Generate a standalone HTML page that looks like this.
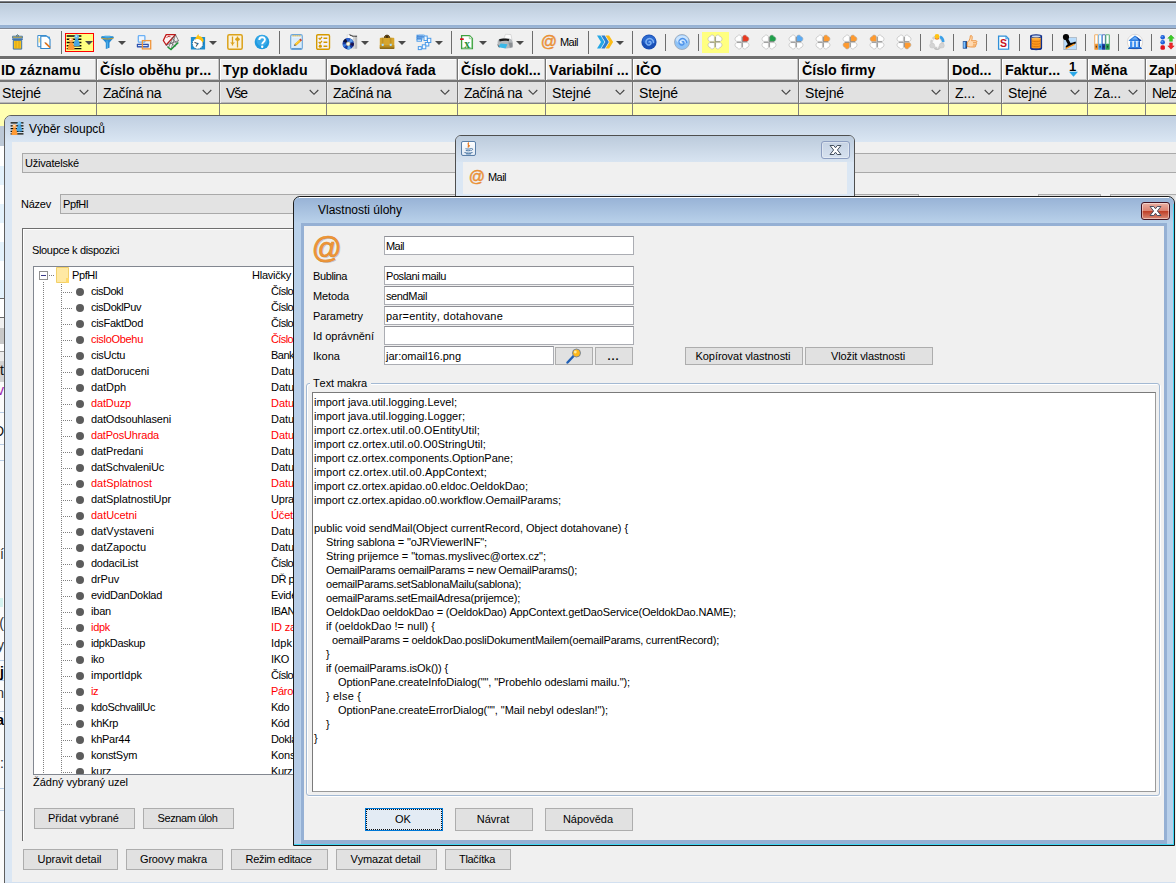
<!DOCTYPE html><html lang="cs"><head><meta charset="utf-8"><title>Vlastnosti úlohy</title><style>
html,body{margin:0;padding:0}
body{width:1176px;height:883px;overflow:hidden;position:relative;background:#f0f0f0;font-family:"Liberation Sans",sans-serif;font-size:11px;color:#000;font-kerning:none}
div,span{position:absolute;box-sizing:border-box;white-space:pre}
.t{line-height:14px;height:14px}
.hd{font-weight:bold;font-size:14.2px;line-height:18px;top:61px;height:18px}
.fl{font-size:14px;line-height:16px;top:85px;height:16px}
.btn{background:#e1e1e1;border:1px solid #adadad;text-align:center;line-height:18px;padding-right:2px}
.fld{background:#fff;border:1px solid #abadb3;border-top-color:#8e8f95;line-height:19px;padding-left:1px}
.sep{width:1px;background:#6d6d6d}
.red{color:#f00}
.tr{left:0;height:16px;line-height:16px;width:260px}
.code{left:2px;line-height:14px;height:14px}
</style></head><body>
<div style="left:0px;top:0px;width:1176px;height:1px;background:#fafafa"></div>
<div style="left:0px;top:1px;width:1176px;height:1px;background:#7a7e86"></div>
<div style="left:0px;top:2px;width:1176px;height:1px;background:#4b4b4b"></div>
<div style="left:0px;top:3px;width:1176px;height:1px;background:#c5d5e6"></div>
<div style="left:0px;top:4px;width:1176px;height:21px;background:linear-gradient(#bdccdc,#d6e3f2)"></div>
<div style="left:0px;top:25px;width:1176px;height:3px;background:linear-gradient(#95b0d2,#9cb8d9)"></div>
<div style="left:0px;top:28px;width:1176px;height:1px;background:#818997"></div>
<div style="left:0px;top:29px;width:1176px;height:27px;background:#f0f0f0;border-top:1px solid #f8f8f8"></div>
<div style="left:0px;top:56px;width:1176px;height:3px;background:#6f6f6f"></div>
<div style="left:0px;top:59px;width:1176px;height:21px;background:#f0f0f0;border-top:1px solid #fff;border-bottom:1px solid #c4c4c4"></div>
<div style="left:0px;top:80px;width:1176px;height:2px;background:#767676"></div>
<div style="left:0px;top:82px;width:1176px;height:21px;background:#e1e1e1;border-bottom:1px solid #b8b8b8"></div>
<div style="left:0px;top:103px;width:1176px;height:1px;background:#808080"></div>
<div style="left:0px;top:104px;width:1176px;height:23px;background:#ffffb2"></div>
<div style="left:95px;top:59px;width:1px;height:21px;background:#c6c6c6"></div>
<div style="left:96px;top:59px;width:1px;height:45px;background:#747474"></div>
<div style="left:97px;top:59px;width:1px;height:21px;background:#fff"></div>
<div style="left:97px;top:82px;width:1px;height:21px;background:#ececec"></div>
<div style="left:96px;top:104px;width:1px;height:12px;background:#808080"></div>
<div style="left:218px;top:59px;width:1px;height:21px;background:#c6c6c6"></div>
<div style="left:219px;top:59px;width:1px;height:45px;background:#747474"></div>
<div style="left:220px;top:59px;width:1px;height:21px;background:#fff"></div>
<div style="left:220px;top:82px;width:1px;height:21px;background:#ececec"></div>
<div style="left:219px;top:104px;width:1px;height:12px;background:#808080"></div>
<div style="left:325px;top:59px;width:1px;height:21px;background:#c6c6c6"></div>
<div style="left:326px;top:59px;width:1px;height:45px;background:#747474"></div>
<div style="left:327px;top:59px;width:1px;height:21px;background:#fff"></div>
<div style="left:327px;top:82px;width:1px;height:21px;background:#ececec"></div>
<div style="left:326px;top:104px;width:1px;height:12px;background:#808080"></div>
<div style="left:456px;top:59px;width:1px;height:21px;background:#c6c6c6"></div>
<div style="left:457px;top:59px;width:1px;height:45px;background:#747474"></div>
<div style="left:458px;top:59px;width:1px;height:21px;background:#fff"></div>
<div style="left:458px;top:82px;width:1px;height:21px;background:#ececec"></div>
<div style="left:457px;top:104px;width:1px;height:12px;background:#808080"></div>
<div style="left:544px;top:59px;width:1px;height:21px;background:#c6c6c6"></div>
<div style="left:545px;top:59px;width:1px;height:45px;background:#747474"></div>
<div style="left:546px;top:59px;width:1px;height:21px;background:#fff"></div>
<div style="left:546px;top:82px;width:1px;height:21px;background:#ececec"></div>
<div style="left:545px;top:104px;width:1px;height:12px;background:#808080"></div>
<div style="left:631px;top:59px;width:1px;height:21px;background:#c6c6c6"></div>
<div style="left:632px;top:59px;width:1px;height:45px;background:#747474"></div>
<div style="left:633px;top:59px;width:1px;height:21px;background:#fff"></div>
<div style="left:633px;top:82px;width:1px;height:21px;background:#ececec"></div>
<div style="left:632px;top:104px;width:1px;height:12px;background:#808080"></div>
<div style="left:797px;top:59px;width:1px;height:21px;background:#c6c6c6"></div>
<div style="left:798px;top:59px;width:1px;height:45px;background:#747474"></div>
<div style="left:799px;top:59px;width:1px;height:21px;background:#fff"></div>
<div style="left:799px;top:82px;width:1px;height:21px;background:#ececec"></div>
<div style="left:798px;top:104px;width:1px;height:12px;background:#808080"></div>
<div style="left:947px;top:59px;width:1px;height:21px;background:#c6c6c6"></div>
<div style="left:948px;top:59px;width:1px;height:45px;background:#747474"></div>
<div style="left:949px;top:59px;width:1px;height:21px;background:#fff"></div>
<div style="left:949px;top:82px;width:1px;height:21px;background:#ececec"></div>
<div style="left:948px;top:104px;width:1px;height:12px;background:#808080"></div>
<div style="left:1000px;top:59px;width:1px;height:21px;background:#c6c6c6"></div>
<div style="left:1001px;top:59px;width:1px;height:45px;background:#747474"></div>
<div style="left:1002px;top:59px;width:1px;height:21px;background:#fff"></div>
<div style="left:1002px;top:82px;width:1px;height:21px;background:#ececec"></div>
<div style="left:1001px;top:104px;width:1px;height:12px;background:#808080"></div>
<div style="left:1086px;top:59px;width:1px;height:21px;background:#c6c6c6"></div>
<div style="left:1087px;top:59px;width:1px;height:45px;background:#747474"></div>
<div style="left:1088px;top:59px;width:1px;height:21px;background:#fff"></div>
<div style="left:1088px;top:82px;width:1px;height:21px;background:#ececec"></div>
<div style="left:1087px;top:104px;width:1px;height:12px;background:#808080"></div>
<div style="left:1144px;top:59px;width:1px;height:21px;background:#c6c6c6"></div>
<div style="left:1145px;top:59px;width:1px;height:45px;background:#747474"></div>
<div style="left:1146px;top:59px;width:1px;height:21px;background:#fff"></div>
<div style="left:1146px;top:82px;width:1px;height:21px;background:#ececec"></div>
<div style="left:1145px;top:104px;width:1px;height:12px;background:#808080"></div>
<span class="hd" style="left:1px;letter-spacing:0.17px">ID záznamu</span>
<span class="hd" style="left:100px;letter-spacing:0px">Číslo oběhu pr...</span>
<span class="hd" style="left:223px;letter-spacing:0.1px">Typ dokladu</span>
<span class="hd" style="left:330px;letter-spacing:0px">Dokladová řada</span>
<span class="hd" style="left:461px;letter-spacing:0px">Číslo dokl...</span>
<span class="hd" style="left:549px;letter-spacing:0px">Variabilní ...</span>
<span class="hd" style="left:636px;letter-spacing:0px">IČO</span>
<span class="hd" style="left:802px;letter-spacing:0px">Číslo firmy</span>
<span class="hd" style="left:952px;letter-spacing:0px">Dod...</span>
<span class="hd" style="left:1005px;letter-spacing:0px">Faktur...</span>
<span class="hd" style="left:1091px;letter-spacing:0px">Měna</span>
<span class="hd" style="left:1149px;letter-spacing:0px">Zapl</span>
<span class="fl" style="left:2px;letter-spacing:-0.116px">Stejné</span>
<svg style="position:absolute;left:79px;top:89px" width="10" height="7" viewBox="0 0 10 7"><path d="M.7 1l4.300 4.300L9.300 1" fill="none" stroke="#444" stroke-width="1.150"/></svg>
<span class="fl" style="left:103px;letter-spacing:-0.474px">Začíná na</span>
<svg style="position:absolute;left:202px;top:89px" width="10" height="7" viewBox="0 0 10 7"><path d="M.7 1l4.300 4.300L9.300 1" fill="none" stroke="#444" stroke-width="1.150"/></svg>
<span class="fl" style="left:226px;letter-spacing:-1.041px">Vše</span>
<svg style="position:absolute;left:309px;top:89px" width="10" height="7" viewBox="0 0 10 7"><path d="M.7 1l4.300 4.300L9.300 1" fill="none" stroke="#444" stroke-width="1.150"/></svg>
<span class="fl" style="left:333px;letter-spacing:-0.474px">Začíná na</span>
<svg style="position:absolute;left:440px;top:89px" width="10" height="7" viewBox="0 0 10 7"><path d="M.7 1l4.300 4.300L9.300 1" fill="none" stroke="#444" stroke-width="1.150"/></svg>
<span class="fl" style="left:464px;letter-spacing:-0.474px">Začíná na</span>
<svg style="position:absolute;left:528px;top:89px" width="10" height="7" viewBox="0 0 10 7"><path d="M.7 1l4.300 4.300L9.300 1" fill="none" stroke="#444" stroke-width="1.150"/></svg>
<span class="fl" style="left:552px;letter-spacing:-0.116px">Stejné</span>
<svg style="position:absolute;left:615px;top:89px" width="10" height="7" viewBox="0 0 10 7"><path d="M.7 1l4.300 4.300L9.300 1" fill="none" stroke="#444" stroke-width="1.150"/></svg>
<span class="fl" style="left:639px;letter-spacing:-0.116px">Stejné</span>
<svg style="position:absolute;left:781px;top:89px" width="10" height="7" viewBox="0 0 10 7"><path d="M.7 1l4.300 4.300L9.300 1" fill="none" stroke="#444" stroke-width="1.150"/></svg>
<span class="fl" style="left:805px;letter-spacing:-0.116px">Stejné</span>
<svg style="position:absolute;left:931px;top:89px" width="10" height="7" viewBox="0 0 10 7"><path d="M.7 1l4.300 4.300L9.300 1" fill="none" stroke="#444" stroke-width="1.150"/></svg>
<span class="fl" style="left:955px;letter-spacing:-0.055px">Z...</span>
<svg style="position:absolute;left:984px;top:89px" width="10" height="7" viewBox="0 0 10 7"><path d="M.7 1l4.300 4.300L9.300 1" fill="none" stroke="#444" stroke-width="1.150"/></svg>
<span class="fl" style="left:1008px;letter-spacing:-0.116px">Stejné</span>
<svg style="position:absolute;left:1070px;top:89px" width="10" height="7" viewBox="0 0 10 7"><path d="M.7 1l4.300 4.300L9.300 1" fill="none" stroke="#444" stroke-width="1.150"/></svg>
<span class="fl" style="left:1094px;letter-spacing:-0.201px">Za...</span>
<svg style="position:absolute;left:1128px;top:89px" width="10" height="7" viewBox="0 0 10 7"><path d="M.7 1l4.300 4.300L9.300 1" fill="none" stroke="#444" stroke-width="1.150"/></svg>
<span class="fl" style="left:1152px;letter-spacing:-0.752px">Nelz</span>
<span style="left:1069px;top:60px;font-weight:bold;font-size:13px;line-height:13px">1</span>
<svg style="position:absolute;left:1069px;top:71px" width="9" height="6" viewBox="0 0 9 6"><path d="M0 .8h9L4.500 5.800z" fill="#2aa8e8"/></svg>
<svg style="position:absolute;left:9px;top:34px;overflow:visible" width="16" height="16" viewBox="0 0 16 16"><path d="M3.600 2.200h9.800v1.800h-9.800z" fill="#f6c21d" stroke="#3f74ad" stroke-width=".9"/><path d="M7 2l1.500-1.500L10 2z" fill="#f6c21d" stroke="#3f74ad" stroke-width=".8"/>
<path d="M3.200 5.200h10.600" stroke="#3f74ad" stroke-width="1.600"/>
<path d="M4.300 6.300h8.400v8.800h-8.400z" fill="#f6c21d" stroke="#3f74ad" stroke-width="1"/>
<path d="M7 7v7.500M10 7v7.500" stroke="#d8a01a" stroke-width=".9"/></svg>
<svg style="position:absolute;left:36px;top:34px;overflow:visible" width="16" height="16" viewBox="0 0 16 16"><path d="M1.800 1.500h8.500v11.200h-8.500z" fill="#fff" stroke="#3f8fcf" stroke-width="1"/><path d="M3.200 4v4.500" stroke="#f6d46a" stroke-width="1.200"/>
<path d="M4.800 2.200h6.200l3 3v9.300h-9.200z" fill="#fff" stroke="#2f86cc" stroke-width="1.100"/><path d="M10.500 2.200l3.500 3.500v-3z" fill="#3f97dc"/>
<path d="M9.300 8.800l4.800 4.700" stroke="#e0741c" stroke-width="1.700"/><path d="M8.400 7.900l1.400.5-.8.900z" fill="#666"/></svg>
<div class="sep" style="left:61px;top:31px;width:1px;height:23px;"></div>
<div style="left:65px;top:33px;width:29px;height:19px;background:#ffff80;border:1px solid #f00"></div>
<svg style="position:absolute;left:66px;top:35px;overflow:visible" width="16" height="16" viewBox="0 0 16 16"><path d="M.7 1h14.700M.7 4.300h14.700M.7 7.500h14.700M.7 10.700h14.700M.7 13.600h14.700" stroke="#0a0a00" stroke-width="1.400"/>
<path d="M7.500 10.400C7.500 7 9 5.600 9.400 3.500h2.600c.4 2.100 1.900 3.500 1.900 6.900 0 1-6.400 1-6.400 0z" fill="#4aa6e0"/><circle cx="10.700" cy="1.700" r="2.400" fill="#62b6ea"/><circle cx="10.200" cy="1.100" r=".9" fill="#c5e6fb"/>
<path d="M1.600 14.200c0-3.400 1.700-4.900 2.100-7h2.800c.4 2.100 2.100 3.600 2.100 7 0 .9-7 .9-7 0z" fill="#ff9a35"/><circle cx="5.100" cy="5" r="2.300" fill="#ffab55"/><circle cx="4.700" cy="4.300" r=".9" fill="#fff0dc"/></svg>
<svg style="position:absolute;left:85px;top:41px" width="8" height="4" viewBox="0 0 8 4"><path d="M0 0h8L4 4z" fill="#4a4a4a"/></svg>
<svg style="position:absolute;left:100px;top:35px;overflow:visible" width="16" height="16" viewBox="0 0 16 16"><path d="M.9 2.300C.9 .300 13.900 .300 13.900 2.300c0 1-4.400 4.700-4.400 5.700v4.800L5.800 14.100V8C5.800 7 .9 3.300 .9 2.300z" fill="#2489d4"/>
<path d="M2.500 1.700c2-1 7.800-1 9.800 0-2 1-7.800 1-9.800 0z" fill="#52b4ea"/>
<path d="M1.300 3.100c2.500 1.200 9.700 1.200 12.200 0" stroke="#d9a425" stroke-width="1" fill="none"/>
<path d="M6.800 5.500c.6 1 .6 2 .6 7.500" stroke="#5fc0f0" stroke-width="1.100" fill="none" opacity=".8"/></svg>
<svg style="position:absolute;left:118px;top:41px" width="8" height="4" viewBox="0 0 8 4"><path d="M0 0h8L4 4z" fill="#4a4a4a"/></svg>
<svg style="position:absolute;left:136px;top:34px;overflow:visible" width="16" height="16" viewBox="0 0 16 16"><rect x="2.300" y="1.600" width="6.600" height="6.600" rx=".8" fill="#eef5fd" stroke="#6ab0f5" stroke-width="1.300"/>
<rect x=".8" y="9.800" width="12" height="3.600" rx=".6" fill="#2a4faf"/><rect x="2" y="11" width="9.600" height="1.100" fill="#dfe8f7"/>
<rect x="6.400" y="6.600" width="8.300" height="8.300" fill="none" stroke="#f0963c" stroke-width="1.300"/></svg>
<svg style="position:absolute;left:162px;top:34px;overflow:visible" width="16" height="16" viewBox="0 0 16 16"><path d="M4.200 .6h9.300L4.200 11 1.300 6.500z" fill="#fdf3f3" stroke="#c01818" stroke-width="1.300" stroke-linejoin="round"/>
<path d="M6 2.500l2.500.2M4.500 4l2.500-2.500" stroke="#c01818" stroke-width=".8"/>
<path d="M13.500 .6l3 6-7.500 9-4.800-4.600M13.500.6L9 15.500M4.200 11l12.300-4.400M7 7.500l6.500 5M10 3.500l5 6.500M11.500 2.500l-5 11" fill="none" stroke="#5a5a5a" stroke-width=".7"/>
<path d="M5.600 13l3.400 2.600 7.300-7" fill="none" stroke="#1f9a3a" stroke-width="1.400"/></svg>
<svg style="position:absolute;left:190px;top:34px;overflow:visible" width="16" height="16" viewBox="0 0 16 16"><rect x=".9" y="2.900" width="14.200" height="12.600" rx=".6" fill="#1e8ed0"/>
<circle cx="7.700" cy="9.600" r="5.300" fill="#fff" stroke="#1a3c5a" stroke-width=".7" stroke-dasharray="1 1.400"/>
<path d="M7.700 9.600L4.500 8.400M7.700 9.600l-1.500 3" stroke="#2a2a2a" stroke-width=".9"/><circle cx="7.700" cy="9.600" r=".9" fill="#1e6ea8"/>
<path d="M8.300 0l-3.500 5.300 2.600-.3c2.200.2 4 1.300 5.200 3.500l1-1.500c-.1-2.600-1.700-4.400-4.600-4.900z" fill="#ffc20e"/></svg>
<svg style="position:absolute;left:209px;top:41px" width="8" height="4" viewBox="0 0 8 4"><path d="M0 0h8L4 4z" fill="#4a4a4a"/></svg>
<svg style="position:absolute;left:227px;top:34px;overflow:visible" width="16" height="16" viewBox="0 0 16 16"><rect x=".8" y=".8" width="14.400" height="14.400" rx="1.500" fill="#faf2dd" stroke="#dba21b" stroke-width="1.500"/>
<path d="M5.500 2.500v9M10.500 2.500v11" stroke="#dba21b" stroke-width="1.300"/><path d="M3 8.500h5l-2.500 2z" fill="#dba21b"/><ellipse cx="10.500" cy="5.200" rx="2.300" ry="1.700" fill="#dba21b"/></svg>
<svg style="position:absolute;left:254px;top:34px;overflow:visible" width="16" height="16" viewBox="0 0 16 16"><circle cx="8" cy="8" r="7.300" fill="#1f9be0"/><circle cx="8" cy="6.500" r="5.500" fill="#4cb4ee" opacity=".6"/>
<path d="M5.300 6c0-3.600 5.600-3.600 5.600-.3 0 2.200-2.700 2.300-2.700 4.600" fill="none" stroke="#fff" stroke-width="1.900"/><circle cx="8.200" cy="12.700" r="1.200" fill="#fff"/></svg>
<div class="sep" style="left:279px;top:31px;width:1px;height:23px;"></div>
<svg style="position:absolute;left:289px;top:34px;overflow:visible" width="16" height="16" viewBox="0 0 16 16"><rect x="1.700" y=".6" width="11.600" height="14.800" rx="1.600" fill="#e6f3fd" stroke="#6fa8da" stroke-width="1.200"/>
<path d="M2.500 14.600h10" stroke="#5f9ad0" stroke-width="1.300"/>
<path d="M3.500 1.800h8.500" stroke="#d6b24a" stroke-width="1.500" stroke-dasharray="1.200 .8"/>
<path d="M3.500 5h8.500M3.500 7h8.500M3.500 9h8.500M3.500 11h8.500M3.500 13h8.500" stroke="#c4e0f6" stroke-width=".7"/>
<path d="M6.300 10.800l5-4.500" stroke="#f5b21a" stroke-width="2.300"/><path d="M6.600 10.300l4.700-4.200" stroke="#ffe04a" stroke-width=".8"/>
<path d="M11 6.500l1.300-1.200" stroke="#c8402a" stroke-width="2.300"/><path d="M4.900 12l.8-1.900 1.400 1.300z" fill="#555"/></svg>
<svg style="position:absolute;left:316px;top:34px;overflow:visible" width="16" height="16" viewBox="0 0 16 16"><rect x=".7" y=".7" width="12.800" height="14.600" rx="1.200" fill="#f4f3fb" stroke="#d59a00" stroke-width="1.400"/>
<path d="M7.500 4.200h3.800M7.500 8.200h3.800M7.500 12.200h3.800" stroke="#d59a00" stroke-width="1.500"/>
<path d="M2.700 4l1.300 1.300 2-2.500M2.700 8l1.300 1.300 2-2.500" fill="none" stroke="#d59a00" stroke-width="1.300"/><circle cx="4.300" cy="12.200" r="1.600" fill="#d59a00"/></svg>
<svg style="position:absolute;left:342px;top:34px;overflow:visible" width="16" height="16" viewBox="0 0 16 16"><path d="M5.200 .8c2-.6 3.500-.5 5 .5l4.800.2v13l-5 .2-4.800-1z" fill="#fbfbfb" stroke="#cfcfcf" stroke-width=".6"/>
<path d="M7.500 .8c1.500.2 2.200 1.400 3.500 1.500h4" fill="none" stroke="#1a1a1a" stroke-width="1"/>
<path d="M12 2.500v12" stroke="#c4c4c4" stroke-width="1.500"/><path d="M14 2.500v12" stroke="#9a9a9a" stroke-width="1.200"/>
<circle cx="6.200" cy="9.800" r="5.700" fill="#173a9e"/>
<path d="M6.200 9.800L1 7.500A5.700 5.700 0 0 1 4 4.500z" fill="#0b1238"/><path d="M6.200 9.800L4 4.500a5.700 5.700 0 0 1 3.500-.2z" fill="#2a5fd0"/>
<path d="M6.200 9.800l2-5.300a5.700 5.700 0 0 1 3 2.800z" fill="#5a9ae8"/><path d="M6.200 9.800l5.600-.8a5.700 5.700 0 0 1-.5 3.300z" fill="#1a0f4a"/>
<path d="M6.200 9.800l3 4.800a5.700 5.700 0 0 1-4 .8z" fill="#5aa8f0"/><path d="M6.200 9.800L2 13.600a5.700 5.700 0 0 1-1.400-3z" fill="#3a7ae0"/>
<circle cx="6.200" cy="9.800" r="1.900" fill="#fff6d8" stroke="#d8c890" stroke-width=".5"/><circle cx="6.200" cy="9.800" r=".7" fill="#fff"/></svg>
<svg style="position:absolute;left:361px;top:41px" width="8" height="4" viewBox="0 0 8 4"><path d="M0 0h8L4 4z" fill="#4a4a4a"/></svg>
<svg style="position:absolute;left:379px;top:34px;overflow:visible" width="16" height="16" viewBox="0 0 16 16"><path d="M5.300 4.200c.2-2.200 1-3 2.700-3s2.500.8 2.700 3" fill="#a87414" stroke="#3a2808" stroke-width="1"/><path d="M6.300 3.900c.2-1.200.7-1.600 1.700-1.600s1.500.4 1.700 1.600z" fill="#1a1208"/>
<rect x=".8" y="3.800" width="14.500" height="10.900" rx="1" fill="#d6a52e"/><path d="M.8 11.200h14.500v2.500c0 .6-.4 1-1 1H1.800c-.6 0-1-.4-1-1z" fill="#b98c20"/>
<path d="M.8 14.200h14.500" stroke="#6a4e10" stroke-width=".9"/>
<path d="M3.600 3.800v7.500M11.600 3.800v7.500" stroke="#bf9226" stroke-width="1.600"/>
<path d="M2.500 9.800h2.400l-.3 2.200h-1.800zM10.500 9.800h2.400l-.3 2.200h-1.800z" fill="#a8dcfa"/></svg>
<svg style="position:absolute;left:398px;top:41px" width="8" height="4" viewBox="0 0 8 4"><path d="M0 0h8L4 4z" fill="#4a4a4a"/></svg>
<svg style="position:absolute;left:416px;top:34px;overflow:visible" width="16" height="16" viewBox="0 0 16 16"><g fill="#f4f9ff" stroke="#4a9ae8" stroke-width="1"><rect x="1" y="1.200" width="7" height="2"/><rect x="1" y="3.200" width="5" height="2"/><rect x="1" y="5.200" width="4.500" height="2"/>
<rect x="8" y="2" width="3.200" height="4.500"/><rect x="11.500" y="4.300" width="3.300" height="4.200"/><rect x="9.300" y="8.500" width="3.500" height="3.500"/><rect x="6.300" y="10.800" width="3.500" height="4"/><rect x="2.300" y="12.600" width="3" height="3"/></g>
<path d="M1 2.200h6.500M1 4.200h4.500" stroke="#2a6ec8" stroke-width=".9"/><path d="M3 .8h4.500v1" fill="none" stroke="#9cc8f5" stroke-width=".9"/></svg>
<svg style="position:absolute;left:435px;top:41px" width="8" height="4" viewBox="0 0 8 4"><path d="M0 0h8L4 4z" fill="#4a4a4a"/></svg>
<div class="sep" style="left:451px;top:31px;width:1px;height:23px;"></div>
<svg style="position:absolute;left:459px;top:34px;overflow:visible" width="16" height="16" viewBox="0 0 16 16"><path d="M2.600 1.700h8l2.800 2.800v10h-10.800z" fill="#fff" stroke="#3fa040" stroke-width="1.300"/><path d="M10.300 1.700v3h3" fill="#eaf5ea" stroke="#7cc47c" stroke-width=".7"/>
<path d="M3.300 14.300h9.500M12.700 5v9" stroke="#8fce8f" stroke-width=".8"/>
<rect x="1" y="4.300" width="3.800" height="1.800" rx=".5" fill="#d8101c"/>
<text x="8.100" y="14" text-anchor="middle" font-family="Liberation Serif, serif" font-weight="bold" font-size="11.500" fill="#2a9238">x</text></svg>
<svg style="position:absolute;left:479px;top:41px" width="8" height="4" viewBox="0 0 8 4"><path d="M0 0h8L4 4z" fill="#4a4a4a"/></svg>
<svg style="position:absolute;left:496px;top:33px;overflow:visible" width="18" height="16" viewBox="0 0 18 16"><path d="M9.500 1.300l5.500.3 1 5.500-8.500-.5z" fill="#fdfdfd" stroke="#c8c8c8" stroke-width=".6"/>
<path d="M1.600 9c0-1.800 1.400-3 2.400-3.300l9.500-.2c1.600.4 3 1.800 3.200 3.500l.2 4.500c0 .8-.5 1.300-1.200 1.400l-5.200.6-8-1.800c-.6-.2-.9-.6-.9-1.200z" fill="#b4b8bc"/>
<path d="M3 6.500c2.500-1.200 8-1.200 10.200-.3l-.5 2c-2.500-.7-6.500-.6-9 .2z" fill="#1a1a1a"/>
<path d="M12.300 9.500l4 .3.200 3.700-2.500 1.200z" fill="#8a8e92"/>
<path d="M4.700 10.500l6.800.8-2 4.300-7.500-1.500z" fill="#3ab8e8"/><path d="M1.800 11.500l1.500 3" stroke="#5a5e62" stroke-width=".8"/></svg>
<svg style="position:absolute;left:516px;top:41px" width="8" height="4" viewBox="0 0 8 4"><path d="M0 0h8L4 4z" fill="#4a4a4a"/></svg>
<div class="sep" style="left:532px;top:31px;width:1px;height:23px;"></div>
<svg style="position:absolute;left:541px;top:34px;overflow:visible" width="16" height="16" viewBox="0 0 16 16"><text x="8.300" y="13.400" text-anchor="middle" font-family="Liberation Sans, sans-serif" font-size="16" fill="#c8c8c8" opacity=".7">@</text><text x="7.800" y="12.900" text-anchor="middle" font-family="Liberation Sans, sans-serif" font-size="16" fill="#f0963a" stroke="#e8882a" stroke-width=".35">@</text></svg>
<span class="t" style="left:560px;top:35px;letter-spacing:-0.542px;">Mail</span>
<div class="sep" style="left:588px;top:31px;width:1px;height:23px;"></div>
<svg style="position:absolute;left:597px;top:34px;overflow:visible" width="16" height="16" viewBox="0 0 16 16"><path d="M0 1.500h3.500L7.500 8 3.500 14.500H0L4 8z" fill="#25a7e6"/><path d="M4.300 1.500h3.500l4 6.500-4 6.500H4.300l4-6.500z" fill="#2b7fd0"/><path d="M8.600 1.500h3.500l4 6.500-4 6.500H8.600l4-6.500z" fill="#fcbc16"/></svg>
<svg style="position:absolute;left:616px;top:41px" width="8" height="4" viewBox="0 0 8 4"><path d="M0 0h8L4 4z" fill="#4a4a4a"/></svg>
<div class="sep" style="left:632px;top:31px;width:1px;height:23px;"></div>
<svg style="position:absolute;left:641px;top:34px;overflow:visible" width="16" height="16" viewBox="0 0 16 16"><circle cx="8" cy="8" r="7.600" fill="#1a4fb5"/><ellipse cx="8" cy="6" rx="6.300" ry="4.500" fill="#2f6fd6" opacity=".8"/>
<path d="M8 8c.8-.8 2-.2 2 1 0 1.600-2 2.600-3.600 1.600-2-1.200-2-4.200.2-5.500 2.600-1.500 6 .3 6 3.500" fill="none" stroke="#7fb2f5" stroke-width="1.500" stroke-linecap="round"/></svg>
<div class="sep" style="left:665px;top:34px;width:1px;height:17px;"></div>
<svg style="position:absolute;left:674px;top:34px;overflow:visible" width="16" height="16" viewBox="0 0 16 16"><circle cx="8" cy="8" r="7.500" fill="#8fc3f7" stroke="#9aa6b5" stroke-width=".8"/><ellipse cx="8" cy="5.500" rx="6" ry="4" fill="#d8ecff" opacity=".8"/>
<path d="M8 8c.8-.8 2-.2 2 1 0 1.600-2 2.600-3.600 1.600-2-1.200-2-4.200.2-5.500 2.600-1.500 6 .3 6 3.500" fill="none" stroke="#4f93ea" stroke-width="1.400" stroke-linecap="round"/>
<path d="M8 8c-.8.800-2 .2-2-1" fill="none" stroke="#fff" stroke-width="1"/></svg>
<div class="sep" style="left:698px;top:34px;width:1px;height:17px;"></div>
<div style="left:702px;top:32px;width:27px;height:21px;background:#ffff80"></div>
<svg style="position:absolute;left:707px;top:34px;overflow:visible" width="16" height="16" viewBox="0 0 16 16"><path d="M8.600 7.400V3.200c0-2.600 3.700-2.900 4.300-.6 2.500.2 2.900 4.200.2 4.800z" transform="translate(16,0) scale(-1,1)" fill="#ffffff" stroke="#b0b0b0" stroke-width=".6"/><path d="M8.600 7.400V3.200c0-2.600 3.700-2.900 4.300-.6 2.500.2 2.900 4.200.2 4.800z"  fill="#ffffff" stroke="#b0b0b0" stroke-width=".6"/><path d="M8.600 7.400V3.200c0-2.600 3.700-2.900 4.300-.6 2.500.2 2.900 4.200.2 4.800z" transform="translate(16,16) scale(-1,-1)" fill="#ffffff" stroke="#b0b0b0" stroke-width=".6"/><path d="M8.600 7.400V3.200c0-2.600 3.700-2.900 4.300-.6 2.500.2 2.900 4.200.2 4.800z" transform="translate(0,16) scale(1,-1)" fill="#ffffff" stroke="#b0b0b0" stroke-width=".6"/><path d="M8.300 3v4.700h4.700M8.300 13v-4.700M3 8.300h4.700" fill="none" stroke="#222" stroke-width=".6" opacity=".55"/></svg>
<svg style="position:absolute;left:734px;top:34px;overflow:visible" width="16" height="16" viewBox="0 0 16 16"><path d="M8.600 7.400V3.200c0-2.600 3.700-2.900 4.300-.6 2.500.2 2.900 4.200.2 4.800z" transform="translate(16,0) scale(-1,1)" fill="#ffffff" stroke="#b0b0b0" stroke-width=".6"/><path d="M8.600 7.400V3.200c0-2.600 3.700-2.900 4.300-.6 2.500.2 2.900 4.200.2 4.800z"  fill="#e8381f" stroke="#b0b0b0" stroke-width=".6"/><path d="M8.600 7.400V3.200c0-2.600 3.700-2.900 4.300-.6 2.500.2 2.900 4.200.2 4.800z" transform="translate(16,16) scale(-1,-1)" fill="#ffffff" stroke="#b0b0b0" stroke-width=".6"/><path d="M8.600 7.400V3.200c0-2.600 3.700-2.900 4.300-.6 2.500.2 2.900 4.200.2 4.800z" transform="translate(0,16) scale(1,-1)" fill="#ffffff" stroke="#b0b0b0" stroke-width=".6"/><path d="M8.300 3v4.700h4.700M8.300 13v-4.700M3 8.300h4.700" fill="none" stroke="#222" stroke-width=".6" opacity=".55"/></svg>
<svg style="position:absolute;left:761px;top:34px;overflow:visible" width="16" height="16" viewBox="0 0 16 16"><path d="M8.600 7.400V3.200c0-2.600 3.700-2.900 4.300-.6 2.500.2 2.900 4.200.2 4.800z" transform="translate(16,0) scale(-1,1)" fill="#ffffff" stroke="#b0b0b0" stroke-width=".6"/><path d="M8.600 7.400V3.200c0-2.600 3.700-2.900 4.300-.6 2.500.2 2.900 4.200.2 4.800z"  fill="#1f9f4a" stroke="#b0b0b0" stroke-width=".6"/><path d="M8.600 7.400V3.200c0-2.600 3.700-2.900 4.300-.6 2.500.2 2.900 4.200.2 4.800z" transform="translate(16,16) scale(-1,-1)" fill="#ffffff" stroke="#b0b0b0" stroke-width=".6"/><path d="M8.600 7.400V3.200c0-2.600 3.700-2.900 4.300-.6 2.500.2 2.900 4.200.2 4.800z" transform="translate(0,16) scale(1,-1)" fill="#ffffff" stroke="#b0b0b0" stroke-width=".6"/><path d="M8.300 3v4.700h4.700M8.300 13v-4.700M3 8.300h4.700" fill="none" stroke="#222" stroke-width=".6" opacity=".55"/></svg>
<svg style="position:absolute;left:788px;top:34px;overflow:visible" width="16" height="16" viewBox="0 0 16 16"><path d="M8.600 7.400V3.200c0-2.600 3.700-2.900 4.300-.6 2.500.2 2.900 4.200.2 4.800z" transform="translate(16,0) scale(-1,1)" fill="#ffffff" stroke="#b0b0b0" stroke-width=".6"/><path d="M8.600 7.400V3.200c0-2.600 3.700-2.900 4.300-.6 2.500.2 2.900 4.200.2 4.800z"  fill="#5aabf5" stroke="#b0b0b0" stroke-width=".6"/><path d="M8.600 7.400V3.200c0-2.600 3.700-2.900 4.300-.6 2.500.2 2.900 4.200.2 4.800z" transform="translate(16,16) scale(-1,-1)" fill="#ffffff" stroke="#b0b0b0" stroke-width=".6"/><path d="M8.600 7.400V3.200c0-2.600 3.700-2.900 4.300-.6 2.500.2 2.900 4.200.2 4.800z" transform="translate(0,16) scale(1,-1)" fill="#ffffff" stroke="#b0b0b0" stroke-width=".6"/><path d="M8.300 3v4.700h4.700M8.300 13v-4.700M3 8.300h4.700" fill="none" stroke="#222" stroke-width=".6" opacity=".55"/></svg>
<svg style="position:absolute;left:815px;top:34px;overflow:visible" width="16" height="16" viewBox="0 0 16 16"><path d="M8.600 7.400V3.200c0-2.600 3.700-2.900 4.300-.6 2.500.2 2.900 4.200.2 4.800z" transform="translate(16,0) scale(-1,1)" fill="#ffffff" stroke="#b0b0b0" stroke-width=".6"/><path d="M8.600 7.400V3.200c0-2.600 3.700-2.900 4.300-.6 2.500.2 2.900 4.200.2 4.800z"  fill="#ff9a2e" stroke="#b0b0b0" stroke-width=".6"/><path d="M8.600 7.400V3.200c0-2.600 3.700-2.900 4.300-.6 2.500.2 2.900 4.200.2 4.800z" transform="translate(16,16) scale(-1,-1)" fill="#ffffff" stroke="#b0b0b0" stroke-width=".6"/><path d="M8.600 7.400V3.200c0-2.600 3.700-2.900 4.300-.6 2.500.2 2.900 4.200.2 4.800z" transform="translate(0,16) scale(1,-1)" fill="#ffffff" stroke="#b0b0b0" stroke-width=".6"/><path d="M8.300 3v4.700h4.700M8.300 13v-4.700M3 8.300h4.700" fill="none" stroke="#222" stroke-width=".6" opacity=".55"/></svg>
<svg style="position:absolute;left:842px;top:34px;overflow:visible" width="16" height="16" viewBox="0 0 16 16"><path d="M8.600 7.400V3.200c0-2.600 3.700-2.900 4.300-.6 2.500.2 2.900 4.200.2 4.800z" transform="translate(16,0) scale(-1,1)" fill="#ffffff" stroke="#b0b0b0" stroke-width=".6"/><path d="M8.600 7.400V3.200c0-2.600 3.700-2.900 4.300-.6 2.500.2 2.900 4.200.2 4.800z"  fill="#ff9a2e" stroke="#b0b0b0" stroke-width=".6"/><path d="M8.600 7.400V3.200c0-2.600 3.700-2.900 4.300-.6 2.500.2 2.900 4.200.2 4.800z" transform="translate(16,16) scale(-1,-1)" fill="#ff9a2e" stroke="#b0b0b0" stroke-width=".6"/><path d="M8.600 7.400V3.200c0-2.600 3.700-2.900 4.300-.6 2.500.2 2.900 4.200.2 4.800z" transform="translate(0,16) scale(1,-1)" fill="#ffffff" stroke="#b0b0b0" stroke-width=".6"/><path d="M8.300 3v4.700h4.700M8.300 13v-4.700M3 8.300h4.700" fill="none" stroke="#222" stroke-width=".6" opacity=".55"/></svg>
<svg style="position:absolute;left:869px;top:34px;overflow:visible" width="16" height="16" viewBox="0 0 16 16"><path d="M8.600 7.400V3.200c0-2.600 3.700-2.900 4.300-.6 2.500.2 2.900 4.200.2 4.800z" transform="translate(16,0) scale(-1,1)" fill="#ff9a2e" stroke="#b0b0b0" stroke-width=".6"/><path d="M8.600 7.400V3.200c0-2.600 3.700-2.900 4.300-.6 2.500.2 2.900 4.200.2 4.800z"  fill="#ffffff" stroke="#b0b0b0" stroke-width=".6"/><path d="M8.600 7.400V3.200c0-2.600 3.700-2.900 4.300-.6 2.500.2 2.900 4.200.2 4.800z" transform="translate(16,16) scale(-1,-1)" fill="#ffffff" stroke="#b0b0b0" stroke-width=".6"/><path d="M8.600 7.400V3.200c0-2.600 3.700-2.900 4.300-.6 2.500.2 2.900 4.200.2 4.800z" transform="translate(0,16) scale(1,-1)" fill="#ffffff" stroke="#b0b0b0" stroke-width=".6"/><path d="M8.300 3v4.700h4.700M8.300 13v-4.700M3 8.300h4.700" fill="none" stroke="#222" stroke-width=".6" opacity=".55"/></svg>
<svg style="position:absolute;left:896px;top:34px;overflow:visible" width="16" height="16" viewBox="0 0 16 16"><path d="M8.600 7.400V3.200c0-2.600 3.700-2.900 4.300-.6 2.500.2 2.900 4.200.2 4.800z" transform="translate(16,0) scale(-1,1)" fill="#ffffff" stroke="#b0b0b0" stroke-width=".6"/><path d="M8.600 7.400V3.200c0-2.600 3.700-2.900 4.300-.6 2.500.2 2.900 4.200.2 4.800z"  fill="#ffffff" stroke="#b0b0b0" stroke-width=".6"/><path d="M8.600 7.400V3.200c0-2.600 3.700-2.900 4.300-.6 2.500.2 2.900 4.200.2 4.800z" transform="translate(16,16) scale(-1,-1)" fill="#ffffff" stroke="#b0b0b0" stroke-width=".6"/><path d="M8.600 7.400V3.200c0-2.600 3.700-2.900 4.300-.6 2.500.2 2.900 4.200.2 4.800z" transform="translate(0,16) scale(1,-1)" fill="#ff9a2e" stroke="#b0b0b0" stroke-width=".6"/><path d="M8.300 3v4.700h4.700M8.300 13v-4.700M3 8.300h4.700" fill="none" stroke="#222" stroke-width=".6" opacity=".55"/></svg>
<div class="sep" style="left:920px;top:34px;width:1px;height:17px;"></div>
<svg style="position:absolute;left:929px;top:34px;overflow:visible" width="16" height="16" viewBox="0 0 16 16"><circle cx="8" cy="8.500" r="5.600" fill="none" stroke="#cfcfcf" stroke-width="2.400" stroke-dasharray="3 1.200"/>
<path d="M11 2.800c2 .8 3.200 2.800 3.200 5.200" fill="none" stroke="#3aa0e8" stroke-width="2.600"/>
<circle cx="8" cy="8.800" r="3.800" fill="#fafafa"/>
<circle cx="8" cy="2.400" r="2.400" fill="#ffc414"/><path d="M6 4.300c1 .8 3 .8 4 0" stroke="#f08a1a" stroke-width="1.100" fill="none"/>
<circle cx="3.200" cy="11.600" r="2.500" fill="#d4d4d4" stroke="#bdbdbd" stroke-width=".4"/><circle cx="12.800" cy="11.600" r="2.500" fill="#d4d4d4" stroke="#bdbdbd" stroke-width=".4"/>
<path d="M5.500 14.500c1.500 1 3.500 1 5 0" fill="none" stroke="#bdbdbd" stroke-width="1.200"/></svg>
<div class="sep" style="left:953px;top:34px;width:1px;height:17px;"></div>
<svg style="position:absolute;left:962px;top:34px;overflow:visible" width="16" height="16" viewBox="0 0 16 16"><rect x="1.200" y="7.600" width="3.500" height="6.600" fill="#3f8fe6" stroke="#1e4f9a" stroke-width=".8"/><rect x="1.600" y="8" width="1.300" height="5.800" fill="#8ccaff"/><path d="M4.300 7.600v6.600" stroke="#0e1f4a" stroke-width=".8"/>
<path d="M5.200 8.300c1.800-.8 3-3 3.100-6.500.6-.6 1.400-.3 1.700.4.400 1.200.2 2.800-.4 4.500h4.400c1 0 1.200 1.400.3 1.700.7.500.5 1.500-.3 1.700.5.500.3 1.500-.5 1.600.3.700-.1 1.300-.9 1.300H8.500c-1.400 0-2-.4-3.300-.5z" fill="#ffd9b0" stroke="#e8862a" stroke-width=".8"/>
<path d="M11 8.500h3M11 10.200h2.800M10.800 11.800h2.300" stroke="#e8862a" stroke-width=".6"/></svg>
<div class="sep" style="left:986px;top:34px;width:1px;height:17px;"></div>
<svg style="position:absolute;left:995px;top:34px;overflow:visible" width="16" height="16" viewBox="0 0 16 16"><path d="M3.600 2.100h7.400l2.600 2.600v10.500h-10z" fill="#fff" stroke="#2f8fd8" stroke-width="1.300"/><path d="M10.800 2.100v2.800h2.800z" fill="#8cc8f5" stroke="#2f8fd8" stroke-width=".6"/>
<path d="M4.300 14.500h8.700" stroke="#a8d4f5" stroke-width=".9"/>
<text x="8.600" y="12.800" text-anchor="middle" font-family="Liberation Sans, sans-serif" font-size="10.500" font-weight="bold" fill="#c8141e">S</text></svg>
<div class="sep" style="left:1019px;top:34px;width:1px;height:17px;"></div>
<svg style="position:absolute;left:1028px;top:34px;overflow:visible" width="16" height="16" viewBox="0 0 16 16"><path d="M2.800 2.300v11.600c0 2 10.600 2 10.600 0V2.300z" fill="#ff9a1f" stroke="#10308a" stroke-width="1.400"/>
<path d="M3.500 2.500c0-1.500 9.200-1.500 9.200 0v1.300c-2 1-7.200 1-9.200 0z" fill="#c8d8f0"/><ellipse cx="8.100" cy="2.200" rx="5.300" ry="1.500" fill="none" stroke="#10308a" stroke-width="1.100"/>
<ellipse cx="8.100" cy="4.600" rx="4.500" ry="1.200" fill="#ffb84a"/>
<path d="M3.600 6.800c2 1.200 7 1.200 9 0M3.600 9.300c2 1.200 7 1.200 9 0M3.600 11.800c2 1.200 7 1.200 9 0" fill="none" stroke="#d8780e" stroke-width=".9"/>
<path d="M2.800 14.200c1.500 1.600 9.100 1.600 10.600 0" fill="none" stroke="#10308a" stroke-width="1.600"/></svg>
<div class="sep" style="left:1052px;top:34px;width:1px;height:17px;"></div>
<svg style="position:absolute;left:1062px;top:34px;overflow:visible" width="16" height="16" viewBox="0 0 16 16"><rect x="1.800" y="3.500" width="12.700" height="12.200" fill="#b8dcfc" stroke="#9aa4b0" stroke-width=".6"/>
<circle cx="4" cy="3" r="3.100" fill="#050505"/>
<path d="M3 5l2.800 5.200c-.8.600-1.500 1.400-2.300 2.800l1 1.300 9.500-5-.5-1.800c-1.800.8-3.500 1.400-5 1.500L6 4.500z" fill="#050505"/>
<path d="M3.500 14.700l9-4.600" stroke="#ff9a1f" stroke-width="1.500"/></svg>
<div class="sep" style="left:1085px;top:34px;width:1px;height:17px;"></div>
<svg style="position:absolute;left:1094px;top:34px;overflow:visible" width="16" height="16" viewBox="0 0 16 16"><rect x="0.4" y=".4" width="3.9" height="15.300" rx=".5" fill="#f0922e"/><rect x="0.9" y=".9" width="2.9" height="9.200" fill="#f8d4a8"/><rect x="1.45" y="1.500" width="1.800" height="7.800" fill="#fff"/><rect x="1.75" y="11.800" width="1.200" height="1.800" fill="#222" opacity=".75"/><rect x="4.3" y=".4" width="3.7" height="15.300" rx=".5" fill="#3f9ce8"/><rect x="4.8" y=".9" width="2.7" height="9.200" fill="#b8dcf8"/><rect x="5.25" y="1.500" width="1.800" height="7.800" fill="#fff"/><rect x="5.55" y="11.800" width="1.200" height="1.800" fill="#222" opacity=".75"/><rect x="8" y=".4" width="3.5" height="15.300" rx=".5" fill="#1438a0"/><rect x="8.5" y=".9" width="2.5" height="9.200" fill="#a8b8e8"/><rect x="8.85" y="1.500" width="1.800" height="7.800" fill="#fff"/><rect x="9.15" y="11.800" width="1.200" height="1.800" fill="#222" opacity=".75"/><rect x="11.5" y=".4" width="4.2" height="15.300" rx=".5" fill="#22984a"/><rect x="12.0" y=".9" width="3.2" height="9.200" fill="#a8d8b8"/><rect x="12.70" y="1.500" width="1.800" height="7.800" fill="#fff"/><rect x="13.00" y="11.800" width="1.200" height="1.800" fill="#222" opacity=".75"/></svg>
<div class="sep" style="left:1118px;top:34px;width:1px;height:17px;"></div>
<svg style="position:absolute;left:1127px;top:34px;overflow:visible" width="16" height="16" viewBox="0 0 16 16"><circle cx="8" cy="8" r="7.700" fill="#fdfdfd" stroke="#d0ccc8" stroke-width=".7"/>
<path d="M1.800 6.200L8 1.500l6.200 4.700v.8H1.800z" fill="#2f7fe0"/><path d="M4.500 5.500L8 2.800l3.500 2.700z" fill="#6aaaf5"/><path d="M9 2.300l5.200 3.900v.8h-2z" fill="#1a4aa8"/>
<path d="M3 7.300h2.400v5.700H3zM6.800 7.300h2.400v5.700H6.800zM10.600 7.300H13v5.700h-2.400z" fill="#3f8ff0"/><path d="M12.200 7.300H13v5.700h-.8z" fill="#1a4aa8"/>
<path d="M2 13h12l.8 2H1.200z" fill="#2f7fe0"/><path d="M1.200 14.300h13.600v.7H1.200z" fill="#1a4aa8"/></svg>
<div class="sep" style="left:1151px;top:34px;width:1px;height:17px;"></div>
<svg style="position:absolute;left:1160px;top:34px;overflow:visible" width="16" height="16" viewBox="0 0 16 16"><circle cx="2.700" cy="3.200" r="2.300" fill="#1f5fd8"/><circle cx="2.200" cy="2.600" r=".9" fill="#5a9af5"/><circle cx="2.700" cy="8.300" r="2.300" fill="#1f5fd8"/><circle cx="2.200" cy="7.700" r=".9" fill="#5a9af5"/>
<rect x=".5" y="11.300" width="4.400" height="4.400" rx="1.500" fill="#e0141e"/>
<path d="M11 1l3.200 3.300h-1.800v3H9.600v-3H7.800z" fill="#3ccc28" stroke="#2aa81a" stroke-width=".5"/><path d="M11 15.200l3.200-3.300h-1.800v-3H9.600v3H7.800z" fill="#f0282a" stroke="#c81a1a" stroke-width=".5"/></svg>
<div style="left:0px;top:126px;width:5px;height:20px;background:#bcc8d6"></div>
<div style="left:0px;top:146px;width:5px;height:20px;background:#ffffff"></div>
<div style="left:0px;top:166px;width:5px;height:19px;background:#e4f2fc"></div>
<div style="left:0px;top:185px;width:5px;height:19px;background:#ffffff"></div>
<div style="left:0px;top:204px;width:5px;height:19px;background:#e4f2fc"></div>
<div style="left:0px;top:223px;width:5px;height:19px;background:#ffffff"></div>
<div style="left:0px;top:242px;width:5px;height:19px;background:#e4f2fc"></div>
<div style="left:0px;top:261px;width:5px;height:19px;background:#ffffff"></div>
<div style="left:0px;top:280px;width:5px;height:19px;background:#e4f2fc"></div>
<div style="left:0px;top:299px;width:5px;height:19px;background:#ffffff"></div>
<div style="left:0px;top:298px;width:4px;height:1px;background:#6a6a6a"></div>
<div style="left:0px;top:317px;width:4px;height:1px;background:#6a6a6a"></div>
<div style="left:0px;top:318px;width:5px;height:565px;background:#fbfbfb"></div>
<div style="left:0px;top:318px;width:4px;height:10px;background:#f0f0f0"></div>
<div style="left:0px;top:328px;width:4px;height:16px;background:#c8c8c8"></div>
<div style="left:0px;top:344px;width:4px;height:8px;background:#ffffff;border-bottom:1px solid #999"></div>
<div style="left:0px;top:352px;width:4px;height:9px;background:#ececec"></div>
<div style="left:0px;top:361px;width:4px;height:21px;background:#d2d2d2"></div>
<div style="left:0px;top:412px;width:4px;height:1px;background:#b9cde6"></div>
<div style="left:0px;top:444px;width:4px;height:1px;background:#b9cde6"></div>
<div style="left:0px;top:460px;width:4px;height:1px;background:#b9cde6"></div>
<div style="left:0px;top:660px;width:4px;height:1px;background:#b9cde6"></div>
<div style="left:0px;top:680px;width:4px;height:1px;background:#b9cde6"></div>
<div style="left:0px;top:711px;width:4px;height:1px;background:#b9cde6"></div>
<div style="left:0px;top:788px;width:4px;height:1px;background:#b9cde6"></div>
<div style="left:0px;top:810px;width:4px;height:1px;background:#b9cde6"></div>
<div style="left:0px;top:598px;width:3px;height:9px;background:#d5f3f0"></div>
<div style="left:0px;top:318px;width:4px;height:565px;overflow:hidden"><span style="right:0;top:43px;font-size:14px;line-height:18px;color:#111;font-weight:normal">t</span><span style="right:0;top:63px;font-size:14px;line-height:18px;color:#a020b0;font-weight:normal">v</span><span style="right:0;top:104px;font-size:14px;line-height:18px;color:#111;font-weight:normal">D</span><span style="right:0;top:227px;font-size:14px;line-height:18px;color:#333;font-weight:normal">í</span><span style="right:0;top:296px;font-size:14px;line-height:18px;color:#333;font-weight:normal">o(</span><span style="right:0;top:318px;font-size:14px;line-height:18px;color:#333;font-weight:normal">y</span><span style="right:0;top:345px;font-size:14px;line-height:18px;color:#000;font-weight:bold">j</span><span style="right:0;top:366px;font-size:14px;line-height:18px;color:#333;font-weight:normal">n</span><span style="right:0;top:393px;font-size:14px;line-height:18px;color:#000;font-weight:bold">a</span><span style="right:0;top:436px;font-size:14px;line-height:18px;color:#333;font-weight:normal">:</span></div>
<div style="left:4px;top:115px;width:1190px;height:790px;border:1px solid #5f5f5f;border-radius:7px;background:#dbe7f4"></div>
<div style="left:5px;top:116px;width:1188px;height:26px;background:linear-gradient(#c0cfe1,#dae6f3);border-radius:6px 0 0 0"></div>
<div style="left:12px;top:142px;width:1170px;height:740px;background:#f0f0f0"></div>
<div style="left:5px;top:882px;width:1171px;height:1px;background:#d2e0f0"></div>
<svg style="position:absolute;left:10px;top:122px;overflow:visible" width="14" height="14" viewBox="0 0 16 16"><path d="M.7 1h14.700M.7 4.300h14.700M.7 7.500h14.700M.7 10.700h14.700M.7 13.600h14.700" stroke="#0a0a00" stroke-width="1.400"/>
<path d="M7.500 10.400C7.500 7 9 5.600 9.400 3.500h2.600c.4 2.100 1.900 3.500 1.900 6.900 0 1-6.400 1-6.400 0z" fill="#4aa6e0"/><circle cx="10.700" cy="1.700" r="2.400" fill="#62b6ea"/><circle cx="10.200" cy="1.100" r=".9" fill="#c5e6fb"/>
<path d="M1.600 14.200c0-3.400 1.700-4.900 2.100-7h2.800c.4 2.100 2.100 3.600 2.100 7 0 .9-7 .9-7 0z" fill="#ff9a35"/><circle cx="5.100" cy="5" r="2.300" fill="#ffab55"/><circle cx="4.700" cy="4.300" r=".9" fill="#fff0dc"/></svg>
<span style="left:29px;top:122px;font-size:12px;line-height:15px">Výběr sloupců</span>
<div style="left:22px;top:153px;width:1160px;height:20px;background:#e3e3e3;border:1px solid #a9a9a9"></div>
<span class="t" style="left:25px;top:156px;letter-spacing:-0.204px;">Uživatelské</span>
<span class="t" style="left:21px;top:197px;letter-spacing:-0.236px;">Název</span>
<div style="left:60px;top:194px;width:859px;height:20px;background:#e3e3e3;border:1px solid #a9a9a9"></div>
<span class="t" style="left:63px;top:197px;letter-spacing:-0.38px;">PpfHl</span>
<div style="left:1038px;top:194px;width:63px;height:20px;background:#e1e1e1;border:1px solid #adadad"></div>
<div style="left:1110px;top:194px;width:70px;height:20px;background:#e1e1e1;border:1px solid #adadad"></div>
<div style="left:22px;top:228px;width:1160px;height:613px;border-left:1px solid #6e6e6e;border-top:1px solid #6e6e6e;"></div>
<div style="left:23px;top:229px;width:1160px;height:611px;border-left:1px solid #fff;border-top:1px solid #fff;"></div>
<span class="t" style="left:32px;top:243px;letter-spacing:-0.345px;">Sloupce k dispozici</span>
<div style="left:33px;top:266px;width:600px;height:509px;background:#fff;border:1px solid #828790;border-right:none;overflow:hidden"><div style="left:0;top:0;width:1px;height:0"></div><div style="left:5px;top:4px;width:9px;height:9px;border:1px solid #919191;background:#fff"></div><div style="left:7px;top:8px;width:5px;height:1px;background:#3a3a8a"></div><div style="left:15px;top:8px;width:6px;height:1px;background-image:linear-gradient(90deg,#808080 50%,transparent 50%);background-size:2px 1px"></div><svg style="position:absolute;left:22px;top:0px" width="13" height="16" viewBox="0 0 13 16"><path d="M.5 .5h12v15h-12z" fill="#ffe9a3" stroke="#f2d06a"/><path d="M10 11h3v5h-3z" fill="#ffd96a"/></svg><span class="tr" style="left:38px;top:0px;letter-spacing:-0.38px;">PpfHl</span><span class="tr" style="left:218px;top:0px;letter-spacing:-0.244px;">Hlavičky</span><div style="left:27px;top:25px;width:11px;height:1px;background-image:linear-gradient(90deg,#808080 50%,transparent 50%);background-size:2px 1px"></div><div style="left:42px;top:21px;width:8px;height:8px;border-radius:50%;background:#5c5c5c"></div><span class="tr" style="left:57px;top:16px;letter-spacing:-0.493px;">cisDokl</span><span class="tr" style="left:237px;top:16px;letter-spacing:-0.612px;">Číslo</span><div style="left:27px;top:41px;width:11px;height:1px;background-image:linear-gradient(90deg,#808080 50%,transparent 50%);background-size:2px 1px"></div><div style="left:42px;top:37px;width:8px;height:8px;border-radius:50%;background:#5c5c5c"></div><span class="tr" style="left:57px;top:32px;letter-spacing:-0.44px;">cisDoklPuv</span><span class="tr" style="left:237px;top:32px;letter-spacing:-0.612px;">Číslo</span><div style="left:27px;top:57px;width:11px;height:1px;background-image:linear-gradient(90deg,#808080 50%,transparent 50%);background-size:2px 1px"></div><div style="left:42px;top:53px;width:8px;height:8px;border-radius:50%;background:#5c5c5c"></div><span class="tr" style="left:57px;top:48px;letter-spacing:-0.302px;">cisFaktDod</span><span class="tr" style="left:237px;top:48px;letter-spacing:-0.612px;">Číslo</span><div style="left:27px;top:73px;width:11px;height:1px;background-image:linear-gradient(90deg,#808080 50%,transparent 50%);background-size:2px 1px"></div><div style="left:42px;top:69px;width:8px;height:8px;border-radius:50%;background:#5c5c5c"></div><span class="tr red" style="left:57px;top:64px;letter-spacing:-0.303px;">cisloObehu</span><span class="tr red" style="left:237px;top:64px;letter-spacing:-0.612px;">Číslo</span><div style="left:27px;top:89px;width:11px;height:1px;background-image:linear-gradient(90deg,#808080 50%,transparent 50%);background-size:2px 1px"></div><div style="left:42px;top:85px;width:8px;height:8px;border-radius:50%;background:#5c5c5c"></div><span class="tr" style="left:57px;top:80px;letter-spacing:-0.295px;">cisUctu</span><span class="tr" style="left:237px;top:80px;letter-spacing:-0.518px;">Bank</span><div style="left:27px;top:105px;width:11px;height:1px;background-image:linear-gradient(90deg,#808080 50%,transparent 50%);background-size:2px 1px"></div><div style="left:42px;top:101px;width:8px;height:8px;border-radius:50%;background:#5c5c5c"></div><span class="tr" style="left:57px;top:96px;letter-spacing:-0.119px;">datDoruceni</span><span class="tr" style="left:237px;top:96px;letter-spacing:-0.059px;">Datu</span><div style="left:27px;top:121px;width:11px;height:1px;background-image:linear-gradient(90deg,#808080 50%,transparent 50%);background-size:2px 1px"></div><div style="left:42px;top:117px;width:8px;height:8px;border-radius:50%;background:#5c5c5c"></div><span class="tr" style="left:57px;top:112px;letter-spacing:-0.078px;">datDph</span><span class="tr" style="left:237px;top:112px;letter-spacing:-0.059px;">Datu</span><div style="left:27px;top:137px;width:11px;height:1px;background-image:linear-gradient(90deg,#808080 50%,transparent 50%);background-size:2px 1px"></div><div style="left:42px;top:133px;width:8px;height:8px;border-radius:50%;background:#5c5c5c"></div><span class="tr red" style="left:57px;top:128px;letter-spacing:-0.139px;">datDuzp</span><span class="tr red" style="left:237px;top:128px;letter-spacing:-0.059px;">Datu</span><div style="left:27px;top:153px;width:11px;height:1px;background-image:linear-gradient(90deg,#808080 50%,transparent 50%);background-size:2px 1px"></div><div style="left:42px;top:149px;width:8px;height:8px;border-radius:50%;background:#5c5c5c"></div><span class="tr" style="left:57px;top:144px;letter-spacing:-0.171px;">datOdsouhlaseni</span><span class="tr" style="left:237px;top:144px;letter-spacing:-0.059px;">Datu</span><div style="left:27px;top:169px;width:11px;height:1px;background-image:linear-gradient(90deg,#808080 50%,transparent 50%);background-size:2px 1px"></div><div style="left:42px;top:165px;width:8px;height:8px;border-radius:50%;background:#5c5c5c"></div><span class="tr red" style="left:57px;top:160px;letter-spacing:-0.194px;">datPosUhrada</span><span class="tr red" style="left:237px;top:160px;letter-spacing:-0.059px;">Datu</span><div style="left:27px;top:185px;width:11px;height:1px;background-image:linear-gradient(90deg,#808080 50%,transparent 50%);background-size:2px 1px"></div><div style="left:42px;top:181px;width:8px;height:8px;border-radius:50%;background:#5c5c5c"></div><span class="tr" style="left:57px;top:176px;letter-spacing:-0.121px;">datPredani</span><span class="tr" style="left:237px;top:176px;letter-spacing:-0.059px;">Datu</span><div style="left:27px;top:201px;width:11px;height:1px;background-image:linear-gradient(90deg,#808080 50%,transparent 50%);background-size:2px 1px"></div><div style="left:42px;top:197px;width:8px;height:8px;border-radius:50%;background:#5c5c5c"></div><span class="tr" style="left:57px;top:192px;letter-spacing:-0.245px;">datSchvaleniUc</span><span class="tr" style="left:237px;top:192px;letter-spacing:-0.059px;">Datu</span><div style="left:27px;top:217px;width:11px;height:1px;background-image:linear-gradient(90deg,#808080 50%,transparent 50%);background-size:2px 1px"></div><div style="left:42px;top:213px;width:8px;height:8px;border-radius:50%;background:#5c5c5c"></div><span class="tr red" style="left:57px;top:208px;letter-spacing:-0.013px;">datSplatnost</span><span class="tr red" style="left:237px;top:208px;letter-spacing:-0.059px;">Datu</span><div style="left:27px;top:233px;width:11px;height:1px;background-image:linear-gradient(90deg,#808080 50%,transparent 50%);background-size:2px 1px"></div><div style="left:42px;top:229px;width:8px;height:8px;border-radius:50%;background:#5c5c5c"></div><span class="tr" style="left:57px;top:224px;letter-spacing:-0.083px;">datSplatnostiUpr</span><span class="tr" style="left:237px;top:224px;letter-spacing:-0.211px;">Upra</span><div style="left:27px;top:249px;width:11px;height:1px;background-image:linear-gradient(90deg,#808080 50%,transparent 50%);background-size:2px 1px"></div><div style="left:42px;top:245px;width:8px;height:8px;border-radius:50%;background:#5c5c5c"></div><span class="tr red" style="left:57px;top:240px;letter-spacing:-0.052px;">datUcetni</span><span class="tr red" style="left:237px;top:240px;letter-spacing:-0.154px;">Účet</span><div style="left:27px;top:265px;width:11px;height:1px;background-image:linear-gradient(90deg,#808080 50%,transparent 50%);background-size:2px 1px"></div><div style="left:42px;top:261px;width:8px;height:8px;border-radius:50%;background:#5c5c5c"></div><span class="tr" style="left:57px;top:256px;letter-spacing:0.002px;">datVystaveni</span><span class="tr" style="left:237px;top:256px;letter-spacing:-0.059px;">Datu</span><div style="left:27px;top:281px;width:11px;height:1px;background-image:linear-gradient(90deg,#808080 50%,transparent 50%);background-size:2px 1px"></div><div style="left:42px;top:277px;width:8px;height:8px;border-radius:50%;background:#5c5c5c"></div><span class="tr" style="left:57px;top:272px;letter-spacing:-0.004px;">datZapoctu</span><span class="tr" style="left:237px;top:272px;letter-spacing:-0.059px;">Datu</span><div style="left:27px;top:297px;width:11px;height:1px;background-image:linear-gradient(90deg,#808080 50%,transparent 50%);background-size:2px 1px"></div><div style="left:42px;top:293px;width:8px;height:8px;border-radius:50%;background:#5c5c5c"></div><span class="tr" style="left:57px;top:288px;letter-spacing:-0.253px;">dodaciList</span><span class="tr" style="left:237px;top:288px;letter-spacing:-0.612px;">Číslo</span><div style="left:27px;top:313px;width:11px;height:1px;background-image:linear-gradient(90deg,#808080 50%,transparent 50%);background-size:2px 1px"></div><div style="left:42px;top:309px;width:8px;height:8px;border-radius:50%;background:#5c5c5c"></div><span class="tr" style="left:57px;top:304px;letter-spacing:-0.147px;">drPuv</span><span class="tr" style="left:237px;top:304px;letter-spacing:-0.515px;">DŘ p</span><div style="left:27px;top:329px;width:11px;height:1px;background-image:linear-gradient(90deg,#808080 50%,transparent 50%);background-size:2px 1px"></div><div style="left:42px;top:325px;width:8px;height:8px;border-radius:50%;background:#5c5c5c"></div><span class="tr" style="left:57px;top:320px;letter-spacing:-0.277px;">evidDanDoklad</span><span class="tr" style="left:237px;top:320px;letter-spacing:-0.303px;">Evide</span><div style="left:27px;top:345px;width:11px;height:1px;background-image:linear-gradient(90deg,#808080 50%,transparent 50%);background-size:2px 1px"></div><div style="left:42px;top:341px;width:8px;height:8px;border-radius:50%;background:#5c5c5c"></div><span class="tr" style="left:57px;top:336px;letter-spacing:-0.199px;">iban</span><span class="tr" style="left:237px;top:336px;letter-spacing:-0.418px;">IBAN</span><div style="left:27px;top:361px;width:11px;height:1px;background-image:linear-gradient(90deg,#808080 50%,transparent 50%);background-size:2px 1px"></div><div style="left:42px;top:357px;width:8px;height:8px;border-radius:50%;background:#5c5c5c"></div><span class="tr red" style="left:57px;top:352px;letter-spacing:-0.295px;">idpk</span><span class="tr red" style="left:237px;top:352px;letter-spacing:-0.135px;">ID za</span><div style="left:27px;top:377px;width:11px;height:1px;background-image:linear-gradient(90deg,#808080 50%,transparent 50%);background-size:2px 1px"></div><div style="left:42px;top:373px;width:8px;height:8px;border-radius:50%;background:#5c5c5c"></div><span class="tr" style="left:57px;top:368px;letter-spacing:-0.348px;">idpkDaskup</span><span class="tr" style="left:237px;top:368px;letter-spacing:0.052px;">Idpk</span><div style="left:27px;top:393px;width:11px;height:1px;background-image:linear-gradient(90deg,#808080 50%,transparent 50%);background-size:2px 1px"></div><div style="left:42px;top:389px;width:8px;height:8px;border-radius:50%;background:#5c5c5c"></div><span class="tr" style="left:57px;top:384px;letter-spacing:-0.354px;">iko</span><span class="tr" style="left:237px;top:384px;letter-spacing:-0.316px;">IKO</span><div style="left:27px;top:409px;width:11px;height:1px;background-image:linear-gradient(90deg,#808080 50%,transparent 50%);background-size:2px 1px"></div><div style="left:42px;top:405px;width:8px;height:8px;border-radius:50%;background:#5c5c5c"></div><span class="tr" style="left:57px;top:400px;letter-spacing:-0.035px;">importIdpk</span><span class="tr" style="left:237px;top:400px;letter-spacing:-0.612px;">Číslo</span><div style="left:27px;top:425px;width:11px;height:1px;background-image:linear-gradient(90deg,#808080 50%,transparent 50%);background-size:2px 1px"></div><div style="left:42px;top:421px;width:8px;height:8px;border-radius:50%;background:#5c5c5c"></div><span class="tr red" style="left:57px;top:416px;letter-spacing:-0.472px;">iz</span><span class="tr red" style="left:237px;top:416px;letter-spacing:-0.309px;">Páro</span><div style="left:27px;top:441px;width:11px;height:1px;background-image:linear-gradient(90deg,#808080 50%,transparent 50%);background-size:2px 1px"></div><div style="left:42px;top:437px;width:8px;height:8px;border-radius:50%;background:#5c5c5c"></div><span class="tr" style="left:57px;top:432px;letter-spacing:-0.391px;">kdoSchvalilUc</span><span class="tr" style="left:237px;top:432px;letter-spacing:-0.524px;">Kdo</span><div style="left:27px;top:457px;width:11px;height:1px;background-image:linear-gradient(90deg,#808080 50%,transparent 50%);background-size:2px 1px"></div><div style="left:42px;top:453px;width:8px;height:8px;border-radius:50%;background:#5c5c5c"></div><span class="tr" style="left:57px;top:448px;letter-spacing:-0.347px;">khKrp</span><span class="tr" style="left:237px;top:448px;letter-spacing:-0.524px;">Kód</span><div style="left:27px;top:473px;width:11px;height:1px;background-image:linear-gradient(90deg,#808080 50%,transparent 50%);background-size:2px 1px"></div><div style="left:42px;top:469px;width:8px;height:8px;border-radius:50%;background:#5c5c5c"></div><span class="tr" style="left:57px;top:464px;letter-spacing:-0.282px;">khPar44</span><span class="tr" style="left:237px;top:464px;letter-spacing:-0.425px;">Dokla</span><div style="left:27px;top:489px;width:11px;height:1px;background-image:linear-gradient(90deg,#808080 50%,transparent 50%);background-size:2px 1px"></div><div style="left:42px;top:485px;width:8px;height:8px;border-radius:50%;background:#5c5c5c"></div><span class="tr" style="left:57px;top:480px;letter-spacing:-0.286px;">konstSym</span><span class="tr" style="left:237px;top:480px;letter-spacing:-0.226px;">Konst</span><div style="left:27px;top:505px;width:11px;height:1px;background-image:linear-gradient(90deg,#808080 50%,transparent 50%);background-size:2px 1px"></div><div style="left:42px;top:501px;width:8px;height:8px;border-radius:50%;background:#5c5c5c"></div><span class="tr" style="left:57px;top:496px;letter-spacing:-0.195px;">kurz</span><span class="tr" style="left:237px;top:496px;letter-spacing:-0.404px;">Kurz</span><div style="left:9px;top:15px;width:1px;height:500px;background-image:linear-gradient(#808080 50%,transparent 50%);background-size:1px 2px"></div><div style="left:27px;top:17px;width:1px;height:500px;background-image:linear-gradient(#808080 50%,transparent 50%);background-size:1px 2px"></div></div>
<span class="t" style="left:33px;top:775px;letter-spacing:-0.021px;">Žádný vybraný uzel</span>
<div class="btn" style="left:34px;top:808px;width:101px;height:21px;letter-spacing:0.005px">Přidat vybrané</div>
<div class="btn" style="left:143px;top:808px;width:91px;height:21px;letter-spacing:-0.382px">Seznam úloh</div>
<div class="btn" style="left:23px;top:849px;width:95px;height:21px;letter-spacing:-0.014px">Upravit detail</div>
<div class="btn" style="left:126px;top:849px;width:97px;height:21px;letter-spacing:-0.173px">Groovy makra</div>
<div class="btn" style="left:231px;top:849px;width:97px;height:21px;letter-spacing:-0.284px">Režim editace</div>
<div class="btn" style="left:336px;top:849px;width:101px;height:21px;letter-spacing:-0.153px">Vymazat detail</div>
<div class="btn" style="left:445px;top:849px;width:66px;height:21px;letter-spacing:-0.314px">Tlačítka</div>
<div style="left:455px;top:135px;width:400px;height:80px;border:1px solid #4f4f4f;border-radius:6px 6px 0 0;background:#dbe7f4"></div>
<div style="left:456px;top:136px;width:398px;height:26px;background:linear-gradient(#bccbdc,#d8e4f1);border-radius:5px 5px 0 0"></div>
<div style="left:463px;top:162px;width:384px;height:32px;background:#f0f0f0"></div>
<div style="left:461px;top:141px;width:15px;height:15px;border:1px solid #5a7fa8;border-radius:2px;background:linear-gradient(#fff,#dfe9f4)"></div>
<svg style="position:absolute;left:462px;top:142px" width="13" height="13" viewBox="0 0 13 13"><path d="M6.800 .5c-2.200 1.800 1.300 2.600-1 5" fill="none" stroke="#e8761a" stroke-width="1.200"/><path d="M7.800 3c-.8.800-.3 1.400-1 2.300" fill="none" stroke="#e8761a" stroke-width=".8"/><path d="M3.500 6.700c1.500.5 4 .5 5.500 0M9.300 6.500c1.600-.3 1.800 1.300 0 2M3.800 8.500c1.300.4 3.500.4 4.800 0M2.500 10.500c2.300.8 6 .8 8 0M4 11.800c1.500.3 3.500.3 5 0" stroke="#3a6a9a" stroke-width=".9" fill="none"/></svg>
<div style="left:821px;top:141px;width:29px;height:18px;border:1px solid #8c9dc0;border-radius:3px;background:linear-gradient(#c6d3e4,#d6e1ef);box-shadow:inset 0 0 0 1px rgba(255,255,255,.35)"></div>
<svg style="position:absolute;left:829px;top:145px" width="13" height="10" viewBox="0 0 13 10"><path d="M1 .5h3.800l1.700 2.300 1.700-2.300h3.800L8.400 5l3.600 4.500H8.200L6.500 7.200 4.800 9.500H1L4.600 5z" fill="#fff" stroke="#45505f" stroke-width="1"/></svg>
<svg style="position:absolute;left:469px;top:169px;overflow:visible" width="16" height="16" viewBox="0 0 16 16"><text x="8.300" y="13.400" text-anchor="middle" font-family="Liberation Sans, sans-serif" font-size="16" fill="#c8c8c8" opacity=".7">@</text><text x="7.800" y="12.900" text-anchor="middle" font-family="Liberation Sans, sans-serif" font-size="16" fill="#f0963a" stroke="#e8882a" stroke-width=".35">@</text></svg>
<span class="t" style="left:488px;top:170px;letter-spacing:-0.542px;">Mail</span>
<div style="left:293px;top:196px;width:882px;height:650px;border:1px solid #1c1c1c;border-radius:7px 7px 0 0;background:#b9d0ea"></div>
<div style="left:294px;top:197px;width:880px;height:1px;background:#fff;left:299px;width:870px"></div>
<div style="left:294px;top:198px;width:880px;height:25px;background:linear-gradient(#98b3d6,#b9d1ea);border-radius:6px 6px 0 0"></div>
<div style="left:294px;top:223px;width:6px;height:621px;background:linear-gradient(#b9d1ea,#b4cae6)"></div>
<div style="left:1167px;top:223px;width:6px;height:621px;background:#b9d0ea"></div>
<div style="left:1173px;top:204px;width:1px;height:640px;background:#3fd8f5"></div>
<div style="left:294px;top:844px;width:880px;height:1px;background:#3fd8f5"></div>
<div style="left:301px;top:223px;width:1866px;height:3px;background:#95b0d4;width:866px"></div>
<div style="left:301px;top:223px;width:3px;height:621px;background:#95b0d4"></div>
<div style="left:1164px;top:223px;width:3px;height:621px;background:#95b0d4"></div>
<div style="left:301px;top:840px;width:866px;height:4px;background:#95b0d4"></div>
<div style="left:304px;top:226px;width:860px;height:614px;background:#f0f0f0"></div>
<span style="left:318px;top:203px;font-size:12px;line-height:15px">Vlastnosti úlohy</span>
<div style="left:1141px;top:202px;width:29px;height:18px;border:1px solid #431422;border-radius:3px;background:linear-gradient(#eab0a3,#dc8473 48%,#bf3f27 52%,#d98a77);box-shadow:inset 0 0 0 1px rgba(255,255,255,.45)"></div>
<svg style="position:absolute;left:1149px;top:206px" width="13" height="10" viewBox="0 0 13 10"><path d="M1 .5h3.800l1.700 2.300 1.700-2.300h3.800L8.400 5l3.600 4.500H8.200L6.500 7.200 4.800 9.500H1L4.600 5z" fill="#fff" stroke="#4a4f60" stroke-width="1"/></svg>
<svg style="position:absolute;left:310px;top:232px;overflow:visible" width="34" height="34" viewBox="0 0 34 34"><text x="17.800" y="27.300" text-anchor="middle" font-family="Liberation Sans, sans-serif" font-size="29.500" fill="#b8b8b8" opacity=".8">@</text><text x="16.800" y="26.300" text-anchor="middle" font-family="Liberation Sans, sans-serif" font-size="29.500" fill="#f0983a" stroke="#e48a2a" stroke-width=".7">@</text></svg>
<span class="t" style="left:313px;top:269px;letter-spacing:-0.385px;">Bublina</span>
<span class="t" style="left:313px;top:289px;letter-spacing:-0.115px;">Metoda</span>
<span class="t" style="left:313px;top:309px;letter-spacing:-0.082px;">Parametry</span>
<span class="t" style="left:313px;top:329px;letter-spacing:-0.013px;">Id oprávnění</span>
<span class="t" style="left:313px;top:349px;letter-spacing:0.018px;">Ikona</span>
<div class="fld" style="left:384px;top:236px;width:250px;height:19px;letter-spacing:-0.542px">Mail</div>
<div class="fld" style="left:384px;top:266px;width:250px;height:19px;letter-spacing:-0.417px">Poslani mailu</div>
<div class="fld" style="left:384px;top:286px;width:250px;height:19px;letter-spacing:-0.378px">sendMail</div>
<div class="fld" style="left:384px;top:306px;width:250px;height:19px;letter-spacing:0.217px">par=entity, dotahovane</div>
<div class="fld" style="left:384px;top:326px;width:250px;height:19px;letter-spacing:0px"></div>
<div class="fld" style="left:384px;top:346px;width:170px;height:19px;letter-spacing:-0.014px">jar:omail16.png</div>
<div class="btn" style="left:555px;top:347px;width:38px;height:18px;"></div>
<svg style="position:absolute;left:566px;top:348px" width="16" height="16" viewBox="0 0 16 16"><path d="M1.500 14.500L8 7.500" stroke="#1f5fb5" stroke-width="2.400" stroke-linecap="round"/><circle cx="10.500" cy="5" r="4" fill="#ffb81a" stroke="#6a7fa0" stroke-width=".9"/><circle cx="9.300" cy="4" r="1.400" fill="#ffe9a0"/></svg>
<div class="btn" style="left:595px;top:347px;width:38px;height:18px;line-height:16px;letter-spacing:1px;text-indent:1px;font-weight:bold">...</div>
<div class="btn" style="left:685px;top:347px;width:118px;height:18px;line-height:16px;letter-spacing:-0.05px">Kopírovat vlastnosti</div>
<div class="btn" style="left:805px;top:347px;width:128px;height:18px;line-height:16px;letter-spacing:-0.106px">Vložit vlastnosti</div>
<div style="left:306px;top:383px;width:854px;height:413px;border:1px solid #a3b9d3;border-radius:3px;box-shadow:inset 1px 1px 0 #fff, 1px 1px 0 #fff"></div>
<span class="t" style="left:310px;top:376px;letter-spacing:-0.101px;background:#f0f0f0;padding:0 4px 0 3px">Text makra</span>
<div style="left:312px;top:392px;width:844px;height:400px;background:#fff;border:1px solid #7a7a7a;border-right-color:#9a9a9a;border-bottom-color:#9a9a9a"><span class="code" style="left:1px;top:2px;letter-spacing:0.037px;">import java.util.logging.Level;</span><span class="code" style="left:1px;top:16px;letter-spacing:0.037px;">import java.util.logging.Logger;</span><span class="code" style="left:1px;top:30px;letter-spacing:0.094px;">import cz.ortex.util.o0.OEntityUtil;</span><span class="code" style="left:1px;top:44px;letter-spacing:0.055px;">import cz.ortex.util.o0.O0StringUtil;</span><span class="code" style="left:1px;top:58px;letter-spacing:-0.008px;">import cz.ortex.components.OptionPane;</span><span class="code" style="left:1px;top:72px;letter-spacing:0.139px;">import cz.ortex.util.o0.AppContext;</span><span class="code" style="left:1px;top:86px;letter-spacing:-0.0px;">import cz.ortex.apidao.o0.eldoc.OeldokDao;</span><span class="code" style="left:1px;top:100px;letter-spacing:-0.025px;">import cz.ortex.apidao.o0.workflow.OemailParams;</span><span class="code" style="left:1px;top:114px;letter-spacing:0px;"></span><span class="code" style="left:1px;top:128px;letter-spacing:-0.033px;">public void sendMail(Object currentRecord, Object dotahovane) {</span><span class="code" style="left:13px;top:142px;letter-spacing:-0.113px;">String sablona = "oJRViewerINF";</span><span class="code" style="left:13px;top:156px;letter-spacing:-0.037px;">String prijemce = "tomas.myslivec@ortex.cz";</span><span class="code" style="left:13px;top:170px;letter-spacing:-0.298px;">OemailParams oemailParams = new OemailParams();</span><span class="code" style="left:13px;top:184px;letter-spacing:-0.226px;">oemailParams.setSablonaMailu(sablona);</span><span class="code" style="left:13px;top:198px;letter-spacing:-0.219px;">oemailParams.setEmailAdresa(prijemce);</span><span class="code" style="left:13px;top:212px;letter-spacing:-0.154px;">OeldokDao oeldokDao = (OeldokDao) AppContext.getDaoService(OeldokDao.NAME);</span><span class="code" style="left:13px;top:226px;letter-spacing:0.045px;">if (oeldokDao != null) {</span><span class="code" style="left:19px;top:240px;letter-spacing:-0.219px;">oemailParams = oeldokDao.posliDokumentMailem(oemailParams, currentRecord);</span><span class="code" style="left:13px;top:254px;letter-spacing:1.326px;">}</span><span class="code" style="left:13px;top:268px;letter-spacing:-0.127px;">if (oemailParams.isOk()) {</span><span class="code" style="left:25px;top:282px;letter-spacing:-0.081px;">OptionPane.createInfoDialog("", "Probehlo odeslami mailu.");</span><span class="code" style="left:13px;top:296px;letter-spacing:0.17px;">} else {</span><span class="code" style="left:25px;top:310px;letter-spacing:-0.065px;">OptionPane.createErrorDialog("", "Mail nebyl odeslan!");</span><span class="code" style="left:13px;top:324px;letter-spacing:1.326px;">}</span><span class="code" style="left:1px;top:338px;letter-spacing:1.326px;">}</span></div>
<div class="btn" style="left:365px;top:808px;width:78px;height:23px;border:1px solid #0078d7;background:#e3ebf4;line-height:20px">OK</div>
<div style="left:366px;top:809px;width:76px;height:21px;border:1px dotted #111"></div>
<div class="btn" style="left:455px;top:808px;width:78px;height:23px;line-height:20px">Návrat</div>
<div class="btn" style="left:545px;top:808px;width:88px;height:23px;line-height:20px">Nápověda</div>
<div style="left:1175px;top:196px;width:1px;height:687px;background:#f0f0f0"></div>
</body></html>
